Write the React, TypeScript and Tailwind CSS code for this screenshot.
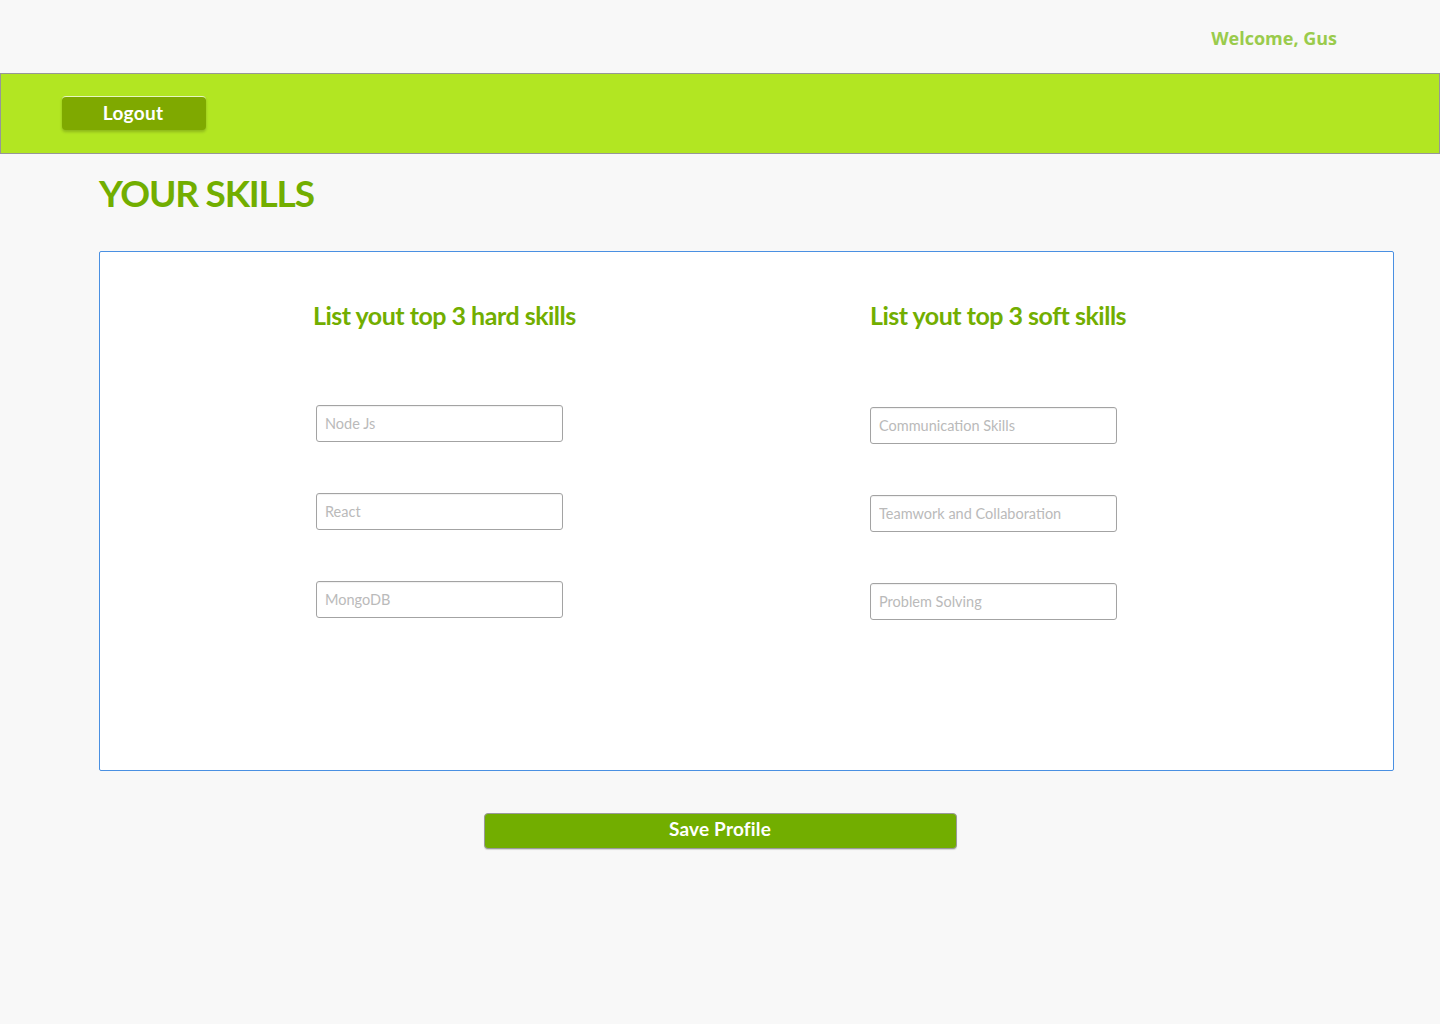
import React from 'react';

const hardSkills = ['Node Js', 'React', 'MongoDB'];
const softSkills = ['Communication Skills', 'Teamwork and Collaboration', 'Problem Solving'];

function SkillInput({ placeholder }: { placeholder: string }) {
  return (
    <input
      type="text"
      placeholder={placeholder}
      className="w-[247px] h-[37px] px-[8px] bg-white border border-[#a3a3a3] rounded-[3px] shadow-[inset_0_1px_1px_rgba(0,0,0,0.06)] text-[14.5px] text-gray-700 placeholder:text-[#bababa] font-['Lato',sans-serif] font-normal outline-none"
    />
  );
}

function SkillColumn({ title, skills, offset }: { title: string; skills: string[]; offset: string }) {
  return (
    <div className="flex flex-col">
      <h2 className="text-[25px] leading-[32px] font-bold tracking-[-0.5px] text-[#72ae00] font-['Lato',sans-serif]">{title}</h2>
      <div className={`flex flex-col gap-[51px] ${offset}`}>
        {skills.map((skill) => (
          <SkillInput key={skill} placeholder={skill} />
        ))}
      </div>
    </div>
  );
}

export default function App() {
  return (
    <div className="min-h-[1024px] w-full bg-[#f8f8f8] font-['Lato',sans-serif]">
      {/* Top greeting */}
      <div className="h-[73px] flex justify-end items-start pt-[25px] pr-[103px]">
        <span className="text-[18px] font-bold text-[#9acb4c] font-['Open_Sans',sans-serif]">Welcome, Gus</span>
      </div>

      {/* Nav bar */}
      <header className="h-[81px] bg-[#b2e622] border border-[#979797] flex items-center pl-[61px]">
        <button className="w-[144px] h-[34px] bg-[#7fa900] rounded-[4px] border-t border-[#e8f7c0] shadow-[0_2px_3px_rgba(0,0,0,0.2)] text-white text-[19px] font-bold tracking-[0.3px] mb-[2px] pr-[2px]">
          Logout
        </button>
      </header>

      <main className="pl-[99px] pr-[46px]">
        <h1 className="mt-[17px] text-[37px] leading-[44px] font-bold tracking-[-1.2px] text-[#72ae00]">YOUR SKILLS</h1>

        {/* Skills card */}
        <section className="mt-[36px] h-[520px] bg-white border border-[#4a90e2] rounded-[2px] flex pl-[213px] pt-[47px]">
          <div className="w-[557px]">
            <SkillColumn title="List yout top 3 hard skills" skills={hardSkills} offset="mt-[74px] ml-[3px]" />
          </div>
          <SkillColumn title="List yout top 3 soft skills" skills={softSkills} offset="mt-[76px]" />
        </section>

        <div className="flex justify-center mt-[42px]">
          <button className="w-[473px] h-[36px] bg-[#72ae00] border border-[#9a9a9a] rounded-[4px] shadow-[0_1px_1px_rgba(0,0,0,0.15)] text-white text-[19px] font-bold tracking-[0.2px] -ml-[53px] pb-[3px]">
            Save Profile
          </button>
        </div>
      </main>
    </div>
  );
}
